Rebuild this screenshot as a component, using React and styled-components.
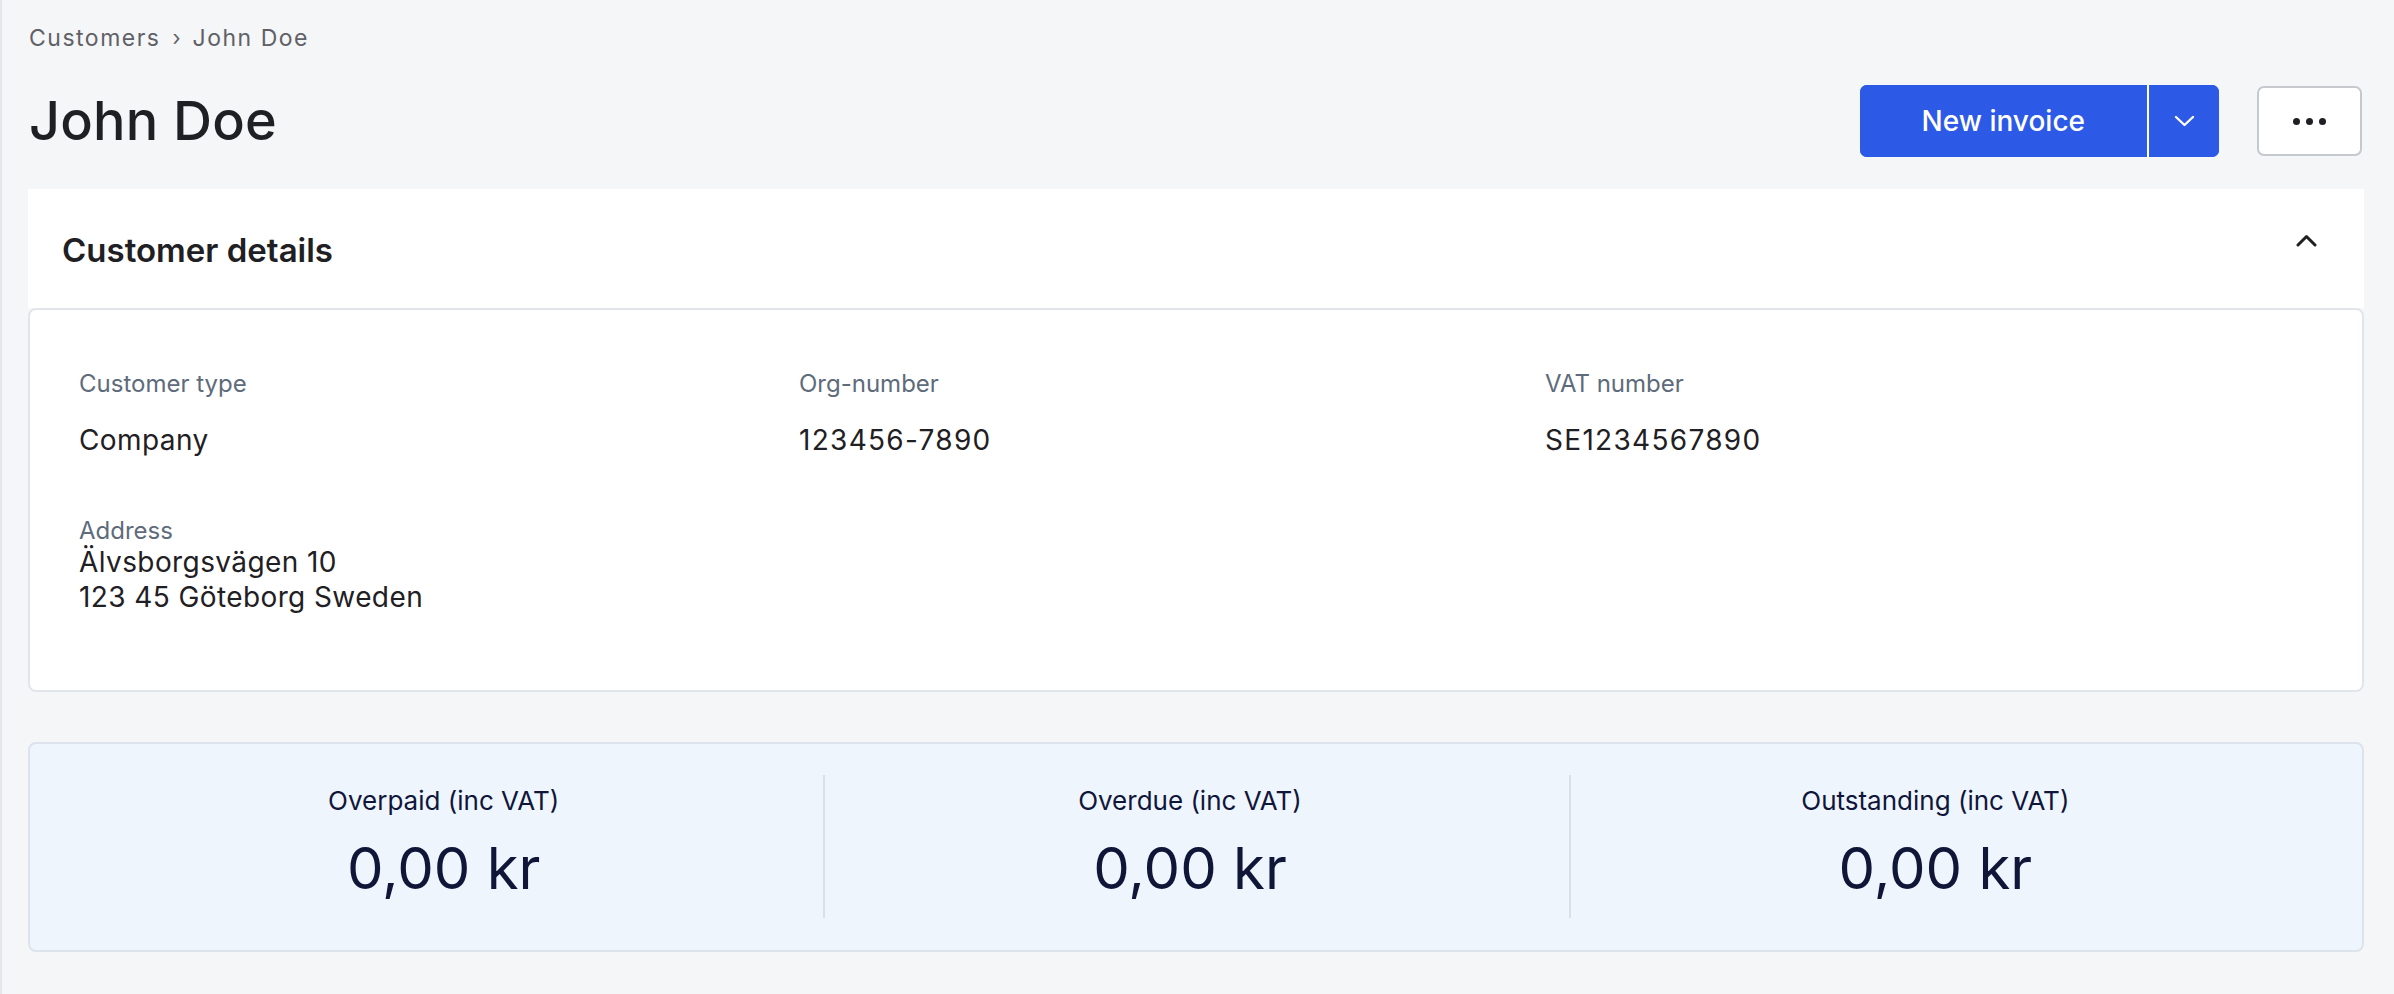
import React from "react";
import styled, { createGlobalStyle } from "styled-components";

const GlobalStyle = createGlobalStyle`
  html, body { margin: 0; padding: 0; background: #f5f6f8; }
  body { font-family: Inter, "Noto Sans", sans-serif; color: #1f2024; }
  * { box-sizing: border-box; }
`;

const Page = styled.div`
  min-height: 994px;
  border-left: 2px solid #e4e6ea;
  padding: 22px 30px 40px 26px;
`;

const Breadcrumb = styled.nav`
  display: flex;
  align-items: center;
  gap: 12px;
  font-size: 23px;
  line-height: 32px;
  letter-spacing: 1.5px;
  color: #5f6166;
  padding-left: 1px;
`;

const Crumb = styled.span``;

const Sep = styled.span`
  font-size: 21px;
  letter-spacing: 0;
`;

const TitleRow = styled.div`
  display: flex;
  align-items: center;
  justify-content: space-between;
  margin-top: 31px;
  padding-right: 2px;
`;

const Title = styled.h1`
  margin: 0;
  font-size: 54px;
  font-weight: 500;
  line-height: 72px;
  color: #1f2024;
  letter-spacing: 0.2px;
  padding-left: 1px;
`;

const Actions = styled.div`
  display: flex;
  align-items: center;
  gap: 38px;
`;

const SplitButton = styled.div`
  display: flex;
  height: 72px;
  border-radius: 7px;
  overflow: hidden;
  background: #2c5ae6;
`;

const PrimaryButton = styled.button`
  border: 0;
  background: #2c5ae6;
  color: #fff;
  font-family: inherit;
  font-size: 28px;
  font-weight: 500;
  padding: 0 ${(p) => (p.$icon ? "0" : "62px")};
  width: ${(p) => (p.$icon ? "72px" : "auto")};
  display: flex;
  align-items: center;
  justify-content: center;
  cursor: pointer;
  & + & {
    border-left: 2px solid #ffffff;
  }
`;

const MoreButton = styled.button`
  width: 105px;
  height: 70px;
  border: 2px solid #c5c8cd;
  border-radius: 7px;
  background: #fff;
  display: flex;
  align-items: center;
  justify-content: center;
  gap: 6px;
  cursor: pointer;
  padding: 0;
`;

const Dot = styled.span`
  width: 7px;
  height: 7px;
  border-radius: 50%;
  background: #1f2024;
`;

const Section = styled.section`
  margin-top: 32px;
`;

const SectionHeader = styled.div`
  height: 119px;
  background: #ffffff;
  display: flex;
  align-items: center;
  justify-content: space-between;
  padding: 0 47px 0 34px;
`;

const SectionTitle = styled.h2`
  margin: 0;
  font-size: 33px;
  font-weight: 600;
  color: #1f2024;
  position: relative;
  top: 1px;
`;

const ChevronUp = styled.svg`
  width: 21px;
  height: 13px;
  position: relative;
  top: -8px;
`;

const DetailsCard = styled.div`
  background: #fff;
  border: 2px solid #e1e5ea;
  border-radius: 8px;
  padding: 60px 48px 75px 49px;
  display: grid;
  grid-template-columns: 720px 746px 1fr;
  row-gap: 59px;
`;

const Field = styled.div`
  display: flex;
  flex-direction: column;
  gap: ${(p) => (p.$tight ? "0px" : "25px")};
`;

const Label = styled.div`
  font-size: 24px;
  line-height: 28px;
  color: #5e6b7b;
`;

const Value = styled.div`
  font-size: 28px;
  line-height: 35px;
  color: #1f2024;
  letter-spacing: ${(p) => (p.$mono ? "1.3px" : "0.4px")};
`;

const StatsCard = styled.div`
  margin-top: 50px;
  background: #eef5fd;
  border: 2px solid #dde3ea;
  border-radius: 8px;
  padding: 31px 48px 32px 48px;
  display: grid;
  grid-template-columns: repeat(3, 1fr);
`;

const Stat = styled.div`
  display: flex;
  flex-direction: column;
  align-items: center;
  gap: 17px;
  padding: 10px 14px 16px 0;
  border-left: ${(p) => (p.$divider ? "2px solid #d9e0e8" : "none")};
`;

const StatLabel = styled.div`
  font-size: 26px;
  line-height: 32px;
  color: #10163a;
`;

const StatValue = styled.div`
  font-size: 58px;
  line-height: 68px;
  color: #0f1638;
`;

const fields = [
  { label: "Customer type", value: "Company" },
  { label: "Org-number", value: "123456-7890", mono: true },
  { label: "VAT number", value: "SE1234567890", mono: true },
];

const stats = [
  { label: "Overpaid (inc VAT)", value: "0,00 kr" },
  { label: "Overdue (inc VAT)", value: "0,00 kr" },
  { label: "Outstanding (inc VAT)", value: "0,00 kr" },
];

export default function App() {
  return (
    <>
      <GlobalStyle />
      <Page>
        <Breadcrumb>
          <Crumb>Customers</Crumb>
          <Sep>›</Sep>
          <Crumb>John Doe</Crumb>
        </Breadcrumb>

        <TitleRow>
          <Title>John Doe</Title>
          <Actions>
            <SplitButton>
              <PrimaryButton>New invoice</PrimaryButton>
              <PrimaryButton $icon aria-label="More invoice options">
                <svg width="21" height="12" viewBox="0 0 21 12" fill="none">
                  <polyline
                    points="2,2 10.5,10 19,2"
                    stroke="#fff"
                    strokeWidth="2.4"
                    strokeLinecap="round"
                    strokeLinejoin="round"
                  />
                </svg>
              </PrimaryButton>
            </SplitButton>
            <MoreButton aria-label="More actions">
              <Dot />
              <Dot />
              <Dot />
            </MoreButton>
          </Actions>
        </TitleRow>

        <Section>
          <SectionHeader>
            <SectionTitle>Customer details</SectionTitle>
            <ChevronUp viewBox="0 0 21 13" fill="none">
              <polyline
                points="2,11 10.5,2.5 19,11"
                stroke="#1f2024"
                strokeWidth="3"
                strokeLinecap="round"
                strokeLinejoin="round"
              />
            </ChevronUp>
          </SectionHeader>
          <DetailsCard>
            {fields.map((f) => (
              <Field key={f.label}>
                <Label>{f.label}</Label>
                <Value $mono={f.mono}>{f.value}</Value>
              </Field>
            ))}
            <Field $tight>
              <Label>Address</Label>
              <Value>Älvsborgsvägen 10</Value>
              <Value>123 45 Göteborg Sweden</Value>
            </Field>
          </DetailsCard>

          <StatsCard>
            {stats.map((s, i) => (
              <Stat key={s.label} $divider={i > 0}>
                <StatLabel>{s.label}</StatLabel>
                <StatValue>{s.value}</StatValue>
              </Stat>
            ))}
          </StatsCard>
        </Section>
      </Page>
    </>
  );
}
